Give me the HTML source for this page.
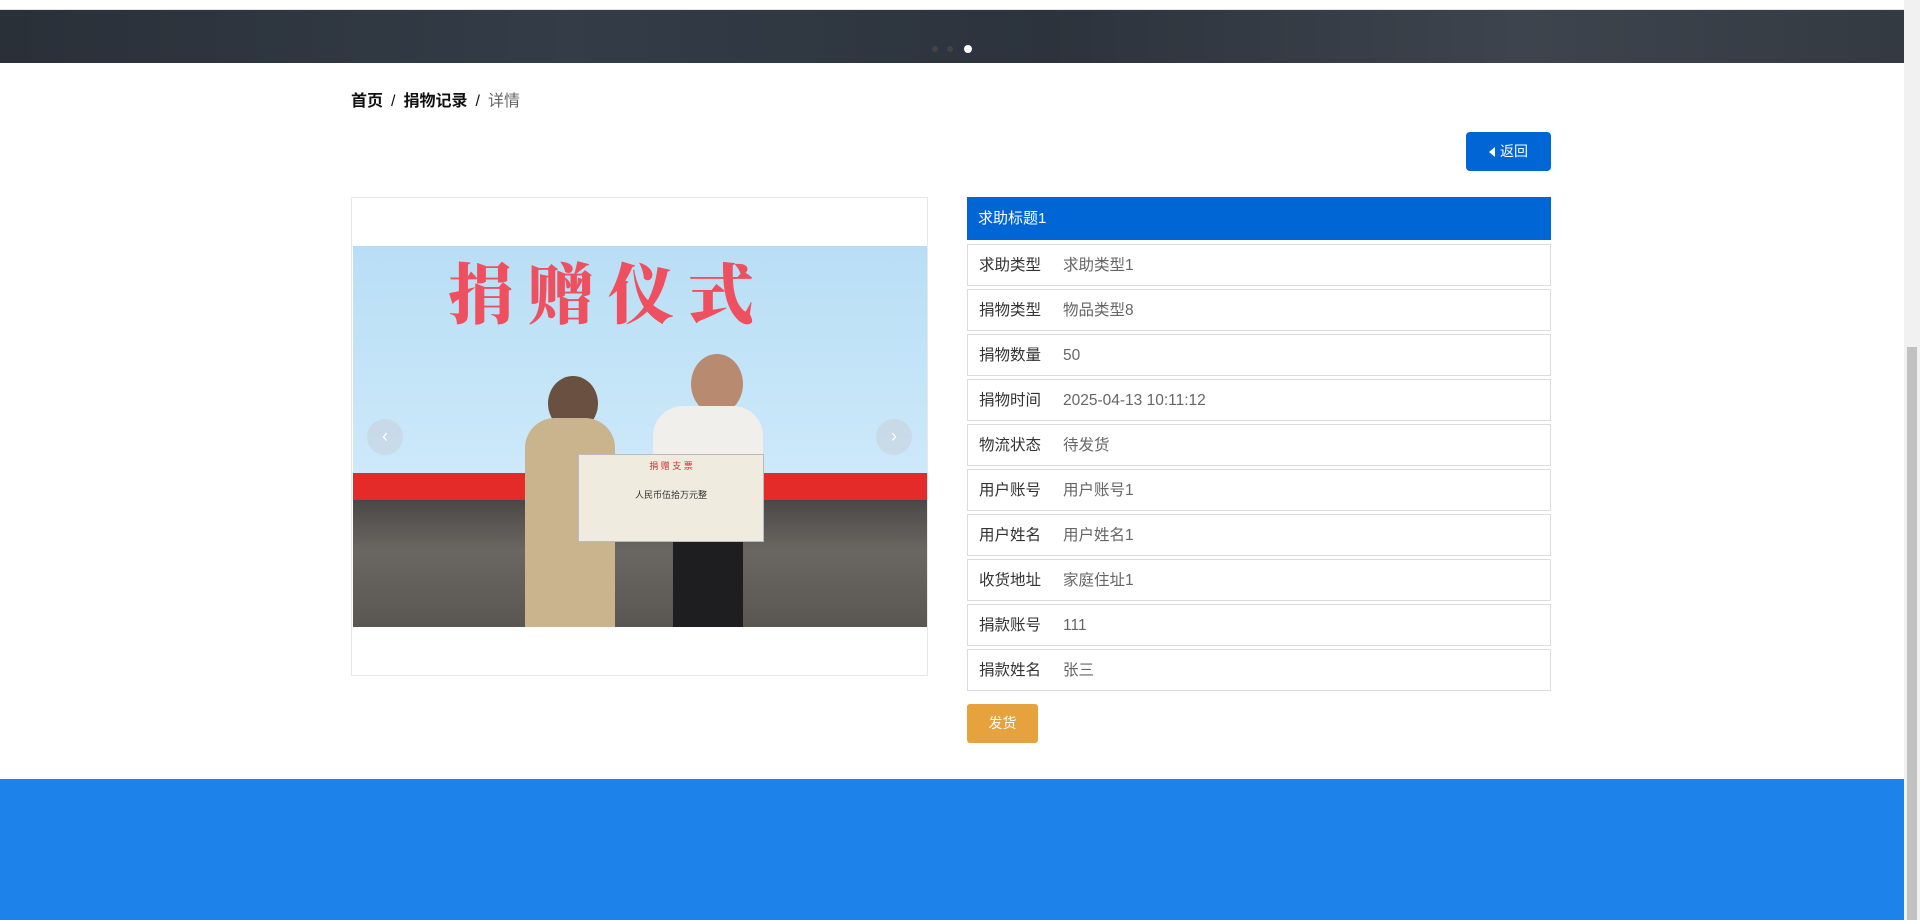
<!DOCTYPE html>
<html><head><meta charset="utf-8"><style>
*{margin:0;padding:0;box-sizing:border-box}
body{width:1920px;height:920px;overflow:hidden;background:#fff;font-family:"Liberation Sans","Noto Sans CJK SC",sans-serif;position:relative}
.abs{position:absolute}
.banner{left:0;top:10px;width:1904px;height:53px;background:linear-gradient(90deg,#2a3038,#333c47 30%,#2c333c 55%,#3d444d 80%,#343a42)}
.top{left:0;top:0;width:1904px;height:10px;background:#fff;border-bottom:1px solid #e4e4e4}
.sb{left:1904px;top:0;width:16px;height:920px;background:#f1f1f1}
.thumb{left:1907px;top:347px;width:10px;height:573px;background:#c1c1c1}
.bc{left:351px;top:87px;font-size:16px;color:#111}
.bc span{margin:0 8px}
.bc .g{color:#666}
.ret{left:1466px;top:132px;width:85px;height:39px;background:#0066d6;border-radius:4px;color:#fff;font-size:14px;line-height:39px;text-align:center}
.imgbox{left:351px;top:197px;width:577px;height:479px;border:1px solid #e8e8e8}
.photo{left:353px;top:246px;width:574px;height:381px;overflow:hidden;background:linear-gradient(#b8def5,#cde9fa 60%,#c5e3f4 100%)}
.hdr{left:967px;top:197px;width:584px;height:43px;background:#0066d6;color:#fff;font-size:15px;line-height:43px;padding-left:11px}
.row{left:967px;width:584px;height:42px;border:1px solid #dcdcdc;font-size:15.5px;line-height:41px}
.row .l{position:absolute;left:11px;color:#333}
.row .v{position:absolute;left:95px;color:#666}
.fh{left:967px;top:704px;width:71px;height:39px;background:#e6a23c;border-radius:3px;color:#fff;font-size:14px;line-height:39px;text-align:center}
.foot{left:0;top:779px;width:1904px;height:141px;background:#1e82eb}
</style></head><body>
<div class="abs top"></div>
<div class="abs banner"></div>
<div class="abs" style="left:932px;top:46px;width:6px;height:6px;border-radius:50%;background:#444"></div>
<div class="abs" style="left:947px;top:46px;width:6px;height:6px;border-radius:50%;background:#444"></div>
<div class="abs" style="left:964px;top:45px;width:8px;height:8px;border-radius:50%;background:#fff"></div>
<div class="abs sb"></div><div class="abs thumb"></div>
<div class="abs bc"><b style="font-weight:600">首页</b><span>/</span><b style="font-weight:600">捐物记录</b><span>/</span><i class="g" style="font-style:normal">详情</i></div>
<div class="abs ret"><span style="display:inline-block;width:0;height:0;border-top:5px solid transparent;border-bottom:5px solid transparent;border-right:6px solid #fff;margin-right:5px;vertical-align:-1px"></span>返回</div>
<div class="abs imgbox"></div>
<div class="abs photo">
 <div class="abs" style="left:0;top:227px;width:574px;height:27px;background:#e52a2a"></div>
 <div class="abs" style="left:0;top:254px;width:574px;height:127px;background:linear-gradient(#4a4846,#6a6662 40%,#5a5652)"></div>
 <div class="abs" style="left:95px;top:-4px;font-size:66px;color:#ee5060;font-family:'Noto Serif CJK SC',serif;font-weight:900;letter-spacing:14px">捐赠仪式</div>
 <div class="abs" style="left:195px;top:130px;width:50px;height:55px;border-radius:50%;background:#6a5040"></div>
 <div class="abs" style="left:172px;top:172px;width:90px;height:209px;background:#c9b48e;border-radius:30px 30px 0 0"></div>
 <div class="abs" style="left:338px;top:108px;width:52px;height:60px;border-radius:50%;background:#b88a70"></div>
 <div class="abs" style="left:300px;top:160px;width:110px;height:125px;background:#f0efec;border-radius:30px 30px 0 0"></div>
 <div class="abs" style="left:320px;top:285px;width:70px;height:96px;background:#1e1e20"></div>
 <div class="abs" style="left:225px;top:208px;width:186px;height:88px;background:#f0ebdf;border:1px solid #bbb;font-size:9px;color:#c33;text-align:center;padding-top:4px">捐 赠 支 票<div style="color:#333;font-size:9px;margin-top:16px">人民币伍拾万元整</div></div>
</div>
<div class="abs" style="left:367px;top:419px;width:36px;height:36px;border-radius:50%;background:rgba(200,210,220,.6);color:#fff;text-align:center;line-height:34px;font-size:18px">‹</div>
<div class="abs" style="left:876px;top:419px;width:36px;height:36px;border-radius:50%;background:rgba(200,210,220,.6);color:#fff;text-align:center;line-height:34px;font-size:18px">›</div>
<div class="abs hdr">求助标题1</div>
<div class="abs row" style="top:244px"><span class="l">求助类型</span><span class="v">求助类型1</span></div>
<div class="abs row" style="top:289px"><span class="l">捐物类型</span><span class="v">物品类型8</span></div>
<div class="abs row" style="top:334px"><span class="l">捐物数量</span><span class="v">50</span></div>
<div class="abs row" style="top:379px"><span class="l">捐物时间</span><span class="v">2025-04-13 10:11:12</span></div>
<div class="abs row" style="top:424px"><span class="l">物流状态</span><span class="v">待发货</span></div>
<div class="abs row" style="top:469px"><span class="l">用户账号</span><span class="v">用户账号1</span></div>
<div class="abs row" style="top:514px"><span class="l">用户姓名</span><span class="v">用户姓名1</span></div>
<div class="abs row" style="top:559px"><span class="l">收货地址</span><span class="v">家庭住址1</span></div>
<div class="abs row" style="top:604px"><span class="l">捐款账号</span><span class="v">111</span></div>
<div class="abs row" style="top:649px"><span class="l">捐款姓名</span><span class="v">张三</span></div>
<div class="abs fh">发货</div>
<div class="abs foot"></div>
</body></html>
